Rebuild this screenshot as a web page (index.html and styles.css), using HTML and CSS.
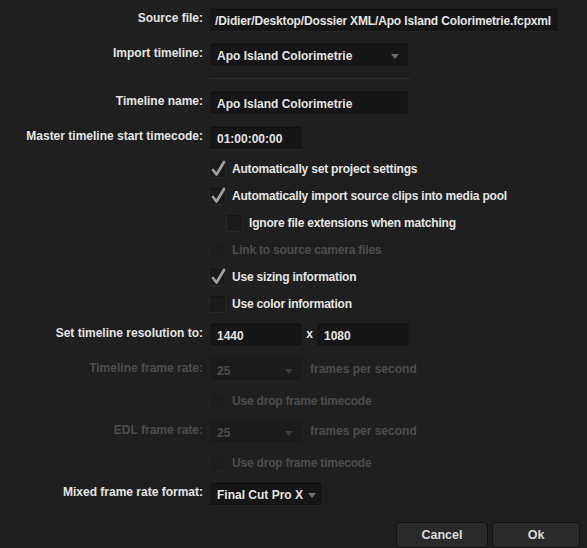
FILE: index.html
```html
<!DOCTYPE html>
<html lang="en">
<head>
    <meta charset="UTF-8">
    <meta name="viewport" content="width=device-width, initial-scale=1.0">
    <title>Load XML</title>
    <link rel="stylesheet" href="styles.css">
</head>
<body>
    <div class="dialog">
        <div class="row">
            <label class="label">Source file:</label>
            <div class="field field-path">/Didier/Desktop/Dossier XML/Apo Island Colorimetrie.fcpxml</div>
        </div>
        <div class="row">
            <label class="label">Import timeline:</label>
            <div class="field select field-wide">Apo Island Colorimetrie<span class="arrow"></span></div>
        </div>
        <div class="separator"></div>
        <div class="row">
            <label class="label">Timeline name:</label>
            <div class="field field-wide">Apo Island Colorimetrie</div>
        </div>
        <div class="row">
            <label class="label">Master timeline start timecode:</label>
            <div class="field field-small">01:00:00:00</div>
        </div>

        <div class="row check-row">
            <span></span>
            <div class="check"><span class="box checked"></span>Automatically set project settings</div>
        </div>
        <div class="row check-row">
            <span></span>
            <div class="check"><span class="box checked"></span>Automatically import source clips into media pool</div>
        </div>
        <div class="row check-row">
            <span></span>
            <div class="check indent"><span class="box"></span>Ignore file extensions when matching</div>
        </div>
        <div class="row check-row disabled">
            <span></span>
            <div class="check"><span class="box"></span>Link to source camera files</div>
        </div>
        <div class="row check-row">
            <span></span>
            <div class="check"><span class="box checked"></span>Use sizing information</div>
        </div>
        <div class="row check-row">
            <span></span>
            <div class="check"><span class="box"></span>Use color information</div>
        </div>

        <div class="row">
            <label class="label">Set timeline resolution to:</label>
            <div class="pair">
                <div class="field field-small">1440</div>
                <span class="times">x</span>
                <div class="field field-small">1080</div>
            </div>
        </div>

        <div class="row disabled">
            <label class="label">Timeline frame rate:</label>
            <div class="pair">
                <div class="field select field-small">25<span class="arrow"></span></div>
                <span class="unit">frames per second</span>
            </div>
        </div>
        <div class="row check-row disabled">
            <span></span>
            <div class="check"><span class="box"></span>Use drop frame timecode</div>
        </div>
        <div class="row disabled">
            <label class="label">EDL frame rate:</label>
            <div class="pair">
                <div class="field select field-small">25<span class="arrow"></span></div>
                <span class="unit">frames per second</span>
            </div>
        </div>
        <div class="row check-row disabled">
            <span></span>
            <div class="check"><span class="box"></span>Use drop frame timecode</div>
        </div>

        <div class="row">
            <label class="label">Mixed frame rate format:</label>
            <div class="field select field-format">Final Cut Pro X<span class="arrow"></span></div>
        </div>

        <div class="buttons">
            <button>Cancel</button>
            <button>Ok</button>
        </div>
    </div>
</body>
</html>
```

FILE: styles.css
```css
html, body {
    margin: 0;
    padding: 0;
    background-color: #1f1f1f;
}
body {
    font-family: "Liberation Sans", Arial, sans-serif;
    font-size: 12px;
    font-weight: bold;
    color: #e4e4e4;
    width: 587px;
    height: 548px;
    overflow: hidden;
}
.dialog {
    display: flex;
    flex-direction: column;
    gap: 10px;
    padding-top: 8px;
}
.row {
    display: grid;
    grid-template-columns: 203px 1fr;
    column-gap: 7px;
    height: 25px;
}
.check-row {
    height: 17px;
}
.label {
    text-align: right;
    line-height: 20px;
}
.field {
    box-sizing: border-box;
    height: 24px;
    line-height: 25px;
    padding: 0 6px;
    background-color: #161616;
    border: 1px solid #191919;
    border-bottom-color: #242424;
    border-radius: 2px;
    box-shadow: inset 0 1px 1px rgba(0,0,0,0.35);
    white-space: nowrap;
    overflow: hidden;
}
.field-path {
    width: 348px;
    padding-left: 4px;
    letter-spacing: -0.15px;
}
.field-wide {
    width: 198px;
}
.field-small {
    width: 92px;
}
.field-format {
    width: 112px;
}
.select {
    position: relative;
}
.arrow {
    position: absolute;
    right: 8px;
    top: 10px;
    width: 0;
    height: 0;
    border-left: 4px solid transparent;
    border-right: 4px solid transparent;
    border-top: 5px solid #6e6e6e;
}
.field-format .arrow {
    right: 5px;
}
.separator {
    width: 201px;
    height: 1px;
    margin: 0 0 2px 209px;
    background-color: #2e2e2e;
}
.check {
    display: flex;
    align-items: center;
    gap: 6px;
    margin-left: -1px;
    line-height: 17px;
    letter-spacing: -0.2px;
}
.check.indent {
    margin-left: 16px;
}
.box {
    position: relative;
    box-sizing: border-box;
    width: 17px;
    height: 17px;
    flex: none;
    background-color: #1a1a1a;
    border: 1px solid #282828;
    border-top-color: #151515;
    border-radius: 2px;
}
.box.checked::after {
    content: "";
    position: absolute;
    left: 1px;
    top: -2px;
    width: 15px;
    height: 17px;
    background: url("data:image/svg+xml,%3Csvg xmlns='http://www.w3.org/2000/svg' width='15' height='17' viewBox='0 0 15 17'%3E%3Cpath d='M2 10 L5.5 14.5 L13 2' fill='none' stroke='%239e9e9e' stroke-width='2.8' stroke-linecap='round' stroke-linejoin='round'/%3E%3C/svg%3E") no-repeat;
}
.pair {
    display: flex;
    align-items: flex-start;
}
.times {
    width: 15px;
    text-align: center;
    line-height: 22px;
}
.unit {
    margin-left: 8px;
    line-height: 22px;
}
.disabled {
    color: #4c4c4c;
}
.disabled .field {
    background-color: #1b1b1b;
    border-color: #1d1d1d;
    border-bottom-color: #232323;
    box-shadow: none;
}
.disabled .arrow {
    border-top-color: #3c3c3c;
}
.disabled .box {
    background-color: #1d1d1d;
    border-color: #222;
}
.buttons {
    display: flex;
    justify-content: flex-end;
    gap: 4px;
    margin-top: 5px;
    padding-right: 7px;
}
button {
    box-sizing: border-box;
    width: 92px;
    height: 26px;
    font-family: "Liberation Sans", Arial, sans-serif;
    font-size: 12.5px;
    font-weight: bold;
    color: #dcdcdc;
    background-color: #2a2a2a;
    border: 1px solid #111;
    border-radius: 4px;
    padding: 0;
}
button + button {
    width: 88px;
}
```
